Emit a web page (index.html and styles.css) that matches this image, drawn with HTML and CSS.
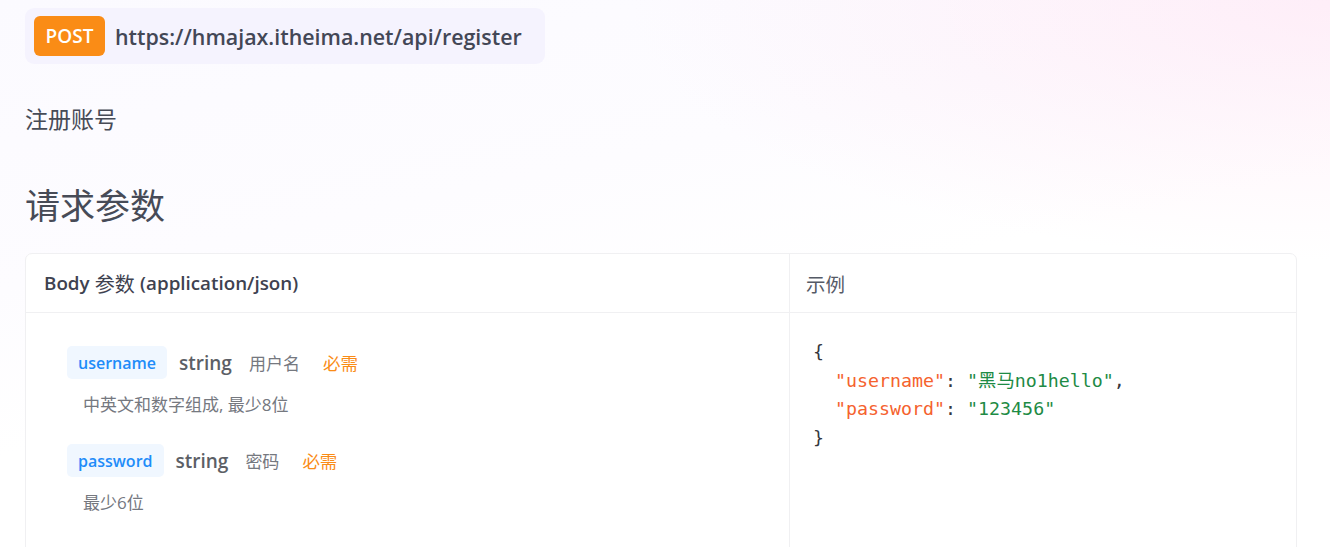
FILE: index.html
```html
<!DOCTYPE html>
<html lang="zh-CN">
<head>
<meta charset="utf-8">
<title>注册账号</title>
<link rel="stylesheet" href="styles.css">
</head>
<body>
<div class="page">
  <div class="endpoint">
    <span class="method">POST</span>
    <span class="url">https://hmajax.itheima.net/api/register</span>
  </div>
  <p class="summary">注册账号</p>
  <h2 class="section-title">请求参数</h2>
  <div class="params">
    <div class="col col-left">
      <div class="col-head">Body <span class="cjk">参数</span> (application/json)</div>
      <div class="col-body fields">
        <div class="field">
          <div class="field-line">
            <span class="field-name">username</span>
            <span class="field-type">string</span>
            <span class="field-title">用户名</span>
            <span class="field-req">必需</span>
          </div>
          <div class="field-desc">中英文和数字组成, 最少8位</div>
        </div>
        <div class="field">
          <div class="field-line">
            <span class="field-name">password</span>
            <span class="field-type">string</span>
            <span class="field-title">密码</span>
            <span class="field-req">必需</span>
          </div>
          <div class="field-desc">最少6位</div>
        </div>
      </div>
    </div>
    <div class="col col-right">
      <div class="col-head light">示例</div>
      <div class="col-body code-wrap">
<pre class="code"><span class="p">{</span>
  <span class="k">"username"</span><span class="p">: </span><span class="s">"黑马no1hello"</span><span class="p">,</span>
  <span class="k">"password"</span><span class="p">: </span><span class="s">"123456"</span>
<span class="p">}</span></pre>
      </div>
    </div>
  </div>
</div>
</body>
</html>
```
FILE: styles.css
```css
html, body {
  margin: 0;
  padding: 0;
}
body {
  font-family: "Open Sans", "Noto Sans CJK SC", sans-serif;
  color: #3e4250;
  background:
    radial-gradient(ellipse 700px 260px at 100% 0%, rgba(255, 226, 242, 0.55), rgba(255, 240, 250, 0) 100%),
    linear-gradient(168deg, #fbfaff 0%, #fdfcff 35%, #ffffff 55%);
  height: 547px;
  overflow: hidden;
}
.page {
  padding: 8px 33px 0 25px;
}
.endpoint {
  display: inline-flex;
  align-items: center;
  gap: 10px;
  padding: 8px 23px 8px 9px;
  background: #f5f3fe;
  border-radius: 9px;
}
.method {
  display: inline-flex;
  align-items: center;
  justify-content: center;
  height: 40px;
  width: 71px;
  background: #fa8c16;
  color: #fff;
  font-weight: 600;
  font-size: 19px;
  border-radius: 6px;
}
.url {
  font-size: 21.4px;
  font-weight: 600;
  color: #434756;
}
.summary {
  margin: 39px 0 0;
  font-size: 23px;
  line-height: 32px;
  color: #474b57;
}
.section-title {
  margin: 48px 0 0;
  font-size: 35px;
  line-height: 46px;
  font-weight: 400;
  color: #474b57;
}
.params {
  margin-top: 24px;
  display: grid;
  grid-template-columns: 764px 1fr;
  border: 1px solid #f0f0f2;
  border-radius: 7px;
  background: #fff;
  height: 320px;
}
.col-left {
  border-right: 1px solid #f0f0f2;
}
.col-head {
  height: 58px;
  display: flex;
  align-items: center;
  gap: 0.28em;
  padding-left: 18px;
  border-bottom: 1px solid #f0f0f2;
  font-size: 18.8px;
  font-weight: 600;
  color: #3e4250;
}
.col-head .cjk {
  font-size: 20px;
  font-weight: 400;
}
.col-head.light {
  padding-left: 16px;
  font-size: 19.5px;
  font-weight: 400;
  color: #555a66;
}
.fields {
  padding: 33px 0 0 41px;
  display: flex;
  flex-direction: column;
  gap: 27px;
}
.field-line {
  display: flex;
  align-items: center;
}
.field-name {
  display: inline-flex;
  align-items: center;
  height: 33px;
  padding: 0 11px;
  background: #f0f7ff;
  border-radius: 5px;
  color: #1f8cf9;
  font-size: 16px;
  font-weight: 600;
}
.field-type {
  margin-left: 12px;
  font-size: 19px;
  font-weight: 600;
  color: #5c5f66;
}
.field-title {
  margin-left: 17px;
  font-size: 17px;
  color: #75787f;
}
.field-req {
  margin-left: 23px;
  font-size: 17.5px;
  color: #fa8c16;
}
.field-desc {
  margin: 14px 0 0 16px;
  font-size: 17px;
  line-height: 24px;
  color: #75787f;
}
.code-wrap {
  padding: 25px 0 0 23px;
}
.code {
  margin: 0;
  font-family: "DejaVu Sans Mono", "Noto Sans CJK SC", monospace;
  font-size: 18.3px;
  line-height: 28.5px;
  color: #34373d;
}
.code .k { color: #f5622e; }
.code .s { color: #1e8b45; }
.code .p { color: #34373d; }
```
